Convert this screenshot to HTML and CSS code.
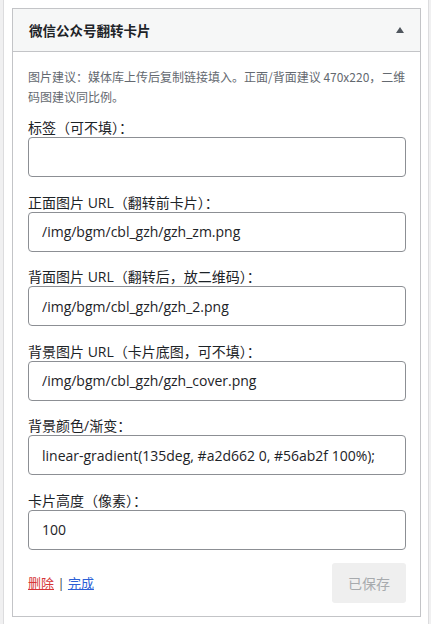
FILE: index.html
```html
<!DOCTYPE html>
<html lang="zh-CN">
<head>
<meta charset="utf-8">
<title>微信公众号翻转卡片</title>
<link rel="stylesheet" href="styles.css">
</head>
<body>
<div class="sidebar">
  <div class="widget">
    <div class="widget-top">
      <h3 class="widget-title">微信公众号翻转卡片</h3>
      <span class="toggle" aria-hidden="true"></span>
    </div>
    <div class="widget-inside">
      <p class="help">图片建议：媒体库上传后复制链接填入。正面/背面建议 470x220，二维码图建议同比例。</p>
      <div class="field first">
        <label class="field-label">标签（可不填）：</label>
        <input class="text-input" type="text" value="">
      </div>
      <div class="field">
        <label class="field-label">正面图片 URL（翻转前卡片）：</label>
        <input class="text-input" type="text" value="/img/bgm/cbl_gzh/gzh_zm.png">
      </div>
      <div class="field">
        <label class="field-label">背面图片 URL（翻转后，放二维码）：</label>
        <input class="text-input" type="text" value="/img/bgm/cbl_gzh/gzh_2.png">
      </div>
      <div class="field">
        <label class="field-label">背景图片 URL（卡片底图，可不填）：</label>
        <input class="text-input" type="text" value="/img/bgm/cbl_gzh/gzh_cover.png">
      </div>
      <div class="field">
        <label class="field-label">背景颜色/渐变：</label>
        <input class="text-input" type="text" value="linear-gradient(135deg, #a2d662 0, #56ab2f 100%);">
      </div>
      <div class="field">
        <label class="field-label">卡片高度（像素）：</label>
        <input class="text-input" type="text" value="100">
      </div>
      <div class="actions">
        <div class="links"><a class="remove" href="#">删除</a><span class="sep"> | </span><a class="done" href="#">完成</a></div>
        <button class="save" type="button" disabled>已保存</button>
      </div>
    </div>
  </div>
</div>
</body>
</html>
```
FILE: styles.css
```css
html, body {
  margin: 0;
  padding: 0;
}
body {
  background: #f0f0f1;
  font-family: "Open Sans", "Noto Sans CJK SC", sans-serif;
  color: #1d2327;
  height: 624px;
  overflow: hidden;
}
.sidebar {
  margin: 0 2px 0 3px;
  background: #fff;
  border-left: 1px solid #dcdcde;
  border-right: 1px solid #dcdcde;
  padding: 8px 7px 0 8px;
  height: 624px;
  box-sizing: border-box;
}
.widget {
  border: 1px solid #c3c4c7;
  background: #fff;
}
.widget-top {
  height: 42px;
  background: #f6f7f7;
  border-bottom: 1px solid #c3c4c7;
  display: flex;
  align-items: center;
  justify-content: space-between;
  padding: 0 16px;
}
.widget-title {
  margin: 0;
  font-size: 13.5px;
  font-weight: 700;
  color: #1d2327;
}
.toggle {
  width: 0;
  height: 0;
  border-left: 4px solid transparent;
  border-right: 4px solid transparent;
  border-bottom: 6px solid #50575e;
}
.widget-inside {
  padding: 15px 14px 13px 15px;
}
.help {
  margin: 0;
  font-family: "Noto Sans CJK SC", "Open Sans", sans-serif;
  font-size: 12px;
  line-height: 20px;
  color: #646970;
}
.field {
  margin-top: 15.5px;
}
.field.first {
  margin-top: 11px;
}
.field-label {
  display: block;
  font-size: 14px;
  line-height: 19px;
  color: #1d2327;
}
.text-input {
  display: block;
  width: 100%;
  height: 40px;
  box-sizing: border-box;
  margin: 0;
  border: 1px solid #8c8f94;
  border-radius: 4px;
  padding: 0 13px;
  font-family: "Open Sans", "Noto Sans CJK SC", sans-serif;
  font-size: 14px;
  color: #1d2327;
  background: #fff;
}
.actions {
  margin-top: 13px;
  display: flex;
  align-items: center;
  justify-content: space-between;
}
.links {
  font-size: 13px;
  color: #3c434a;
}
.remove {
  color: #d63638;
  text-decoration: underline;
}
.done {
  color: #2c5fd6;
  text-decoration: underline;
}
.sep {
  color: #3c434a;
}
.save {
  width: 74px;
  height: 40px;
  border: none;
  border-radius: 3px;
  background: #efefef;
  color: #a7aaad;
  font-family: "Open Sans", "Noto Sans CJK SC", sans-serif;
  font-size: 14px;
  padding: 0;
}
```
